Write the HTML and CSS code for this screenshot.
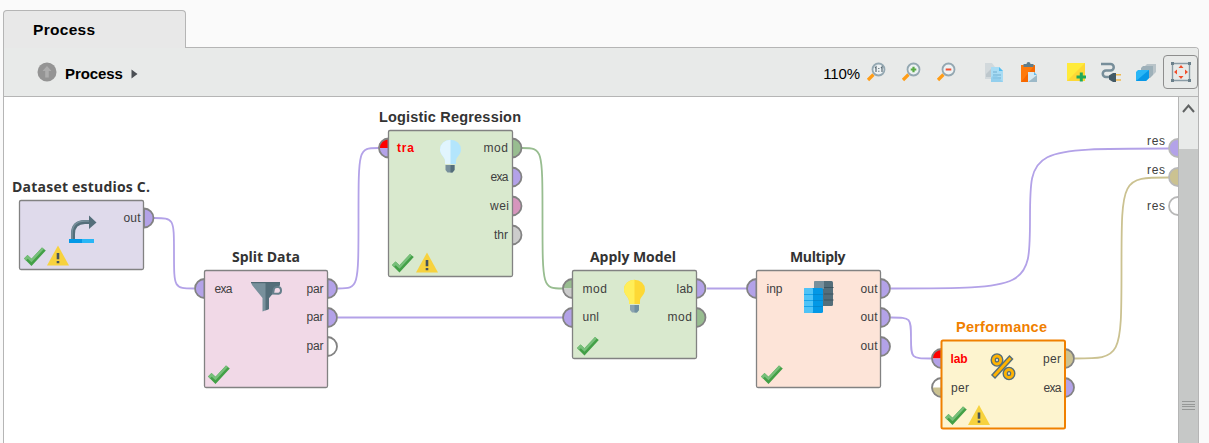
FILE: index.html
```html
<!DOCTYPE html>
<html lang="es">
<head>
<meta charset="utf-8">
<title>Process</title>
<link rel="stylesheet" href="styles.css">
</head>
<body>
<div class="tabs"><div class="tab">Process</div></div>
<main class="panel">
  <header class="toolbar">
    <svg class="up" width="20" height="20" viewBox="0 0 20 20"><circle cx="10" cy="10" r="9.500" fill="#949494"/><path d="M10 4l4.500 5h-2.700v6.500h-3.600v-6.500h-2.700z" fill="#adadad"/></svg>
    <span class="crumb">Process</span>
    <svg class="arrow" width="7" height="10" viewBox="0 0 7 10"><path d="M.5.500L6.500 5l-6 4.500z" fill="#4b4f54"/></svg>
    <div class="tools">
      <span class="zoom">110%</span>
      <svg class="tool lens" viewBox="0 0 20 20"><path d="M7.500 12.500L2 18" class="handle"/><circle cx="12.500" cy="7.500" r="6" class="glass"/><path d="M9 6l1-1v5M15 6l1-1v5M12.800 6v1M12.800 8.700v1" class="digits"/></svg>
      <svg class="tool lens" viewBox="0 0 20 20"><path d="M7.500 12.500L2 18" class="handle"/><circle cx="12.500" cy="7.500" r="6" class="glass"/><path d="M9.700 7.500h5.600M12.500 4.700v5.600" stroke="#5aaa45" stroke-width="2.200"/></svg>
      <svg class="tool lens last" viewBox="0 0 20 20"><path d="M7.500 12.500L2 18" class="handle"/><circle cx="12.500" cy="7.500" r="6" class="glass"/><path d="M9.700 7.500h5.600" stroke="#ef5236" stroke-width="2"/></svg>
      <svg class="tool copy" viewBox="0 0 20 20"><path d="M1 1h7l3 4v12H1z" fill="#d2d9dc"/><path d="M2 12l5-5v8H2z" fill="#bdc7cc"/><path d="M7 5h8l4 4v11H7z" fill="#a8dcf4"/><path d="M15 5l4 4h-4z" fill="#52bdf0"/><path d="M9 10h4M9 13h8M9 16h8" stroke="#83bddb" stroke-width="1.500"/><path d="M7 20v-4l4-4 8 8z" fill="#8ac9e9" opacity=".7"/></svg>
      <svg class="tool paste" viewBox="0 0 20 20"><path d="M2 3h14v17H2z" fill="#ff7a0b"/><path d="M16 3v17H2z" fill="#f76800"/><path d="M4.500 2h3a2 2 0 0 1 4 0h3v3h-10z" fill="#607d8b"/><path d="M9 10h6l3 3v7H9z" fill="#d4e9f4"/><path d="M18 13v7H9l4-3z" fill="#9cb9c8"/><path d="M15 10l3 3h-3z" fill="#66bce9"/></svg>
      <svg class="tool note" viewBox="0 0 20 20"><path d="M0 1h18v18H0z" fill="#ffeb3b"/><path d="M18 1v18H0z" fill="#fdd835"/><path d="M9.500 15h9.500M14.300 10.500v9" stroke="#20a95a" stroke-width="3"/></svg>
      <svg class="tool plug" viewBox="0 0 20 20"><path d="M0 2h9.500a3.200 3.200 0 0 1 0 6.500H5a3.200 3.200 0 0 0 0 6.500h5" fill="none" stroke="#778e9a" stroke-width="2.500"/><path d="M15 11v9h-3l-4-2.500v-4l4-2.500z" fill="#435965"/><path d="M15 12.700h5M15 18h5" stroke="#efb84d" stroke-width="1.600"/></svg>
      <svg class="tool layers" viewBox="0 0 20 20"><path d="M9 4l2-2h9v8l-3 3H9z" fill="#b9c4c9"/><path d="M5 6l2-2h10v9l-3 3H5z" fill="#9db0b9"/><path d="M0 10l2-2h11v8l-3 3H0z" fill="#29b6f6"/><path d="M0 19L13 8v8l-3 3z" fill="#0798e7"/></svg>
      <span class="fit"><svg width="20" height="20" viewBox="0 0 20 20"><path d="M0 1.500h20M0 18.500h20M1.500 0v20M18.500 0v20" stroke="#8a9ca6" stroke-width="1.400"/><path d="M0 0h3v3H0zM17 0h3v3h-3zM0 17h3v3H0zM17 17h3v3h-3z" fill="#6b808b"/><path d="M10 3l2.500 3h-5zM10 17l2.500-3h-5zM3 10l3-2.500v5zM17 10l-3-2.500v5z" fill="#f04e2c"/></svg></span>
    </div>
  </header>
  <section class="work">
    <svg class="canvas" width="1174" height="346" viewBox="4 97 1174 346">
      <defs>
        <g id="check"><path d="M0 11.500L3.500 8l4 3.800L18 0.500l3.800 3L7.500 19z" fill="#43a047"/><path d="M0 11.500L3.500 8l4 3.800L18 .500l1.900 1.500L7.500 15.200l-3.700-3.500-2 1.800z" fill="#77bf7a"/></g>
        <g id="warn"><path d="M11 0l11 20H0z" fill="#f7d23e"/><path d="M11 7.500v6.200M11 15.400v2.400" stroke="#45545c" stroke-width="2.600"/></g>
        <g id="out"><path d="M-.5-9.500a9.500 9.500 0 0 1 0 19z"/></g>
        <g id="in"><path d="M.5-9.500a9.500 9.500 0 0 0 0 19z"/></g>
      </defs>

      <g class="wires">
        <path d="M154 218c20 0 20 0 20 35.200s0 35.300 20 35.300"/>
        <path d="M338 288.500c20.500 0 20.500 0 20.500-70.500s0-70 20-70"/>
        <path d="M338 317.500h225M707 288.500h40M891 288.500C1030 288.500 1030 288.500 1030 218.500S1030 148.500 1169 148.500"/>
        <path d="M891 317.500c20 0 20 0 20 20.500s0 20.500 20 20.500"/>
        <path class="model" d="M522 148c20.500 0 20.500 0 20.500 70s0 70.500 20.500 70.500"/>
        <path class="perf" d="M1075 358.500c46.500 0 46.500 0 46.500-90.500s0-90.500 47.500-90.500"/>
      </g>

      <g class="ports data">
        <use href="#out" x="144.500" y="218"/><use href="#in" x="204" y="288.500"/><use href="#out" x="328" y="288.500"/><use href="#out" x="328" y="317.500"/>
        <use href="#out" x="512.500" y="177"/><use href="#in" x="572" y="317.500"/><use href="#out" x="696.500" y="288.500"/>
        <use href="#in" x="756" y="288.500"/><use href="#out" x="881" y="288.500"/><use href="#out" x="881" y="317.500"/><use href="#out" x="881" y="346.500"/>
        <use href="#out" x="1065" y="387.500"/>
      </g>
      <g class="ports">
        <use href="#out" x="328" y="346.500" fill="#fff"/><use href="#out" x="512.500" y="148" fill="#98bd90"/><use href="#out" x="512.500" y="206" fill="#d696bd"/><use href="#out" x="512.500" y="235" fill="#ccc"/>
        <use href="#out" x="696.500" y="317.500" fill="#98bd90"/><use href="#out" x="1065" y="358.500" fill="#cbc291"/>
      </g>
      <path d="M388 148v-9.500a9.500 9.500 0 0 0-9.500 9.500zM941 358.500v-9.500a9.500 9.500 0 0 0-9.500 9.500z" fill="red"/>
      <path d="M388 148v9.500a9.500 9.500 0 0 1-9.500-9.500zM941 358.500v9.500a9.500 9.500 0 0 1-9.500-9.500z" fill="#b3a2e8"/>
      <path d="M572 288.500v-9.500a9.500 9.500 0 0 0-9.500 9.500z" fill="#98bd90"/><path d="M572 288.500v9.500a9.500 9.500 0 0 1-9.500-9.500z" fill="#ccc"/>
      <path d="M941 387.500v-9.500a9.500 9.500 0 0 0-9.500 9.500z" fill="#fff"/><path d="M941 387.500v9.500a9.500 9.500 0 0 1-9.500-9.500z" fill="#cbc291"/>
      <g class="ports" fill="none"><use href="#in" x="388" y="148"/><use href="#in" x="572" y="288.500"/><use href="#in" x="941" y="358.500"/><use href="#in" x="941" y="387.500"/></g>
      <g class="ports result"><circle cx="1178" cy="148" r="9" fill="#b3a2e8"/><circle cx="1178" cy="177" r="9" fill="#cbc291"/><circle cx="1178" cy="206" r="9" fill="#fff"/></g>

      <g class="boxes">
        <rect x="19.500" y="200.500" width="124" height="69" rx="1.500" fill="#dfdaeb"/>
        <rect x="204.500" y="270.500" width="123" height="117" rx="1.500" fill="#f1d9e7"/>
        <rect x="388.500" y="130.500" width="124" height="146" rx="1.500" fill="#d9e9ce"/>
        <rect x="572.500" y="270.500" width="124" height="88" rx="1.500" fill="#d9e9ce"/>
        <rect x="756.500" y="270.500" width="124" height="117" rx="1.500" fill="#fde4d8"/>
        <rect class="selected" x="941.500" y="340.500" width="123.500" height="88" rx="1.500" fill="#fdf4cf"/>
      </g>

      <g class="titles">
        <text class="open" x="12" y="192" textLength="138">Dataset estudios C.</text>
        <text class="open" x="232" y="262" textLength="68">Split Data</text>
        <text x="379" y="122" textLength="142">Logistic Regression</text>
        <text class="open" x="590" y="262" textLength="86">Apply Model</text>
        <text class="open" x="790" y="262" textLength="55.500">Multiply</text>
        <text x="956" y="332" textLength="91" fill="#f08000">Performance</text>
      </g>
      <g class="labels">
        <text x="123.500" y="222" textLength="17">out</text>
        <text x="214.500" y="293" textLength="18">exa</text><text x="306.500" y="293" textLength="17">par</text><text x="306.500" y="321" textLength="17">par</text><text x="306.500" y="350" textLength="17">par</text>
        <text class="required" x="397" y="152" textLength="17">tra</text><text x="483.500" y="152" textLength="24.500">mod</text><text x="490.500" y="181" textLength="18">exa</text><text x="490" y="210" textLength="19">wei</text><text x="494" y="239" textLength="14">thr</text>
        <text x="582.500" y="293" textLength="24.500">mod</text><text x="582.500" y="321" textLength="16.500">unl</text><text x="676.500" y="293" textLength="16.500">lab</text><text x="667.500" y="321" textLength="24.500">mod</text>
        <text x="766.500" y="293" textLength="16">inp</text><text x="860.500" y="293" textLength="17">out</text><text x="860.500" y="321" textLength="17">out</text><text x="860.500" y="350" textLength="17">out</text>
        <text class="required" x="950.500" y="363" textLength="17">lab</text><text x="951" y="392" textLength="18">per</text><text x="1043" y="363" textLength="18">per</text><text x="1043.500" y="392" textLength="18">exa</text>
        <text x="1147" y="145" textLength="18">res</text><text x="1147" y="174" textLength="18">res</text><text x="1147" y="210" textLength="18">res</text>
      </g>

      <use href="#check" x="24" y="247"/><use href="#check" x="208" y="365"/><use href="#check" x="392" y="253.500"/><use href="#check" x="577" y="336.500"/><use href="#check" x="761" y="365"/><use href="#check" x="945" y="406"/>
      <use href="#warn" x="47" y="245.500"/><use href="#warn" x="416" y="252.500"/><use href="#warn" x="968" y="405"/>

      <g id="retrieve"><path d="M73 239v-5q0-12 12-12h5" fill="none" stroke="#546e7a" stroke-width="4"/><path d="M72 239v-5q0-13 13-13h5" fill="none" stroke="#78909c" stroke-width="1.500"/><path d="M89 215.500l7.500 7-7.500 6.500z" fill="#546e7a"/><path d="M69 239h25v4H69z" fill="#29b6f6"/><path d="M69 239h13v4H69z" fill="#0398e6"/></g>
      <g id="filter"><path d="M251 282h29v3l-11 13v11l-6.500 2.500V298L252 285z" fill="#78909c"/><path d="M265.500 282H280v3l-11 13v11l-3.500 1.500z" fill="#546e7a"/><path d="M251 282h29v1.200h-29z" fill="#506873"/><path d="M273 293.500l1-5q1-1.500 3-1.500h1.500q2.500.500 2.500 3.500t-2.500 3.200z" fill="#f1d9e7" stroke="#657f8b" stroke-width="2"/></g>
      <g id="bulb-light"><path d="M445 164v-3c0-4-5-6-5-11.500a10.500 9.800 0 0 1 21 0c0 5.500-5 7.500-5 11.500v3z" fill="#b3e5fc"/><path d="M450.500 139.700v24.300H445v-3c0-4-5-6-5-11.500a10.500 9.800 0 0 1 10.500-9.800z" fill="#e1f5fe"/><path d="M445.500 165h9v5l-2 2.500h-5l-2-2.500z" fill="#78909c"/><path d="M450.500 165h4v5l-2 2.500h-2z" fill="#546e7a"/></g>
      <g id="bulb-gold"><path d="M629 304v-3c0-4-5-6-5-11.500a10.500 9.800 0 0 1 21 0c0 5.500-5 7.500-5 11.500v3z" fill="#fdd835"/><path d="M634.500 279.700v24.300H629v-3c0-4-5-6-5-11.500a10.500 9.800 0 0 1 10.500-9.800z" fill="#ffee58"/><path d="M630 305h9v5l-2 2.500h-5l-2-2.500z" fill="#8ca4b0"/><path d="M634.500 305h4.500v5l-2 2.500h-2.500z" fill="#70909f"/></g>
      <g id="copies"><rect x="814" y="281" width="19" height="25" rx="1.500" fill="#546e7a"/><path d="M815 281h9v8h-10v-7z" fill="#78909c"/><path d="M824 287.500h9.500M824 294h9.500M824 300h9.500" stroke="#3c535e"/><rect x="804" y="288" width="19" height="25" rx="1.500" fill="#0398e6"/><rect x="804" y="288" width="9" height="25" rx="1" fill="#4fc3f7"/><path d="M804 294.500h9M804 300.500h9M804 306.500h9" stroke="#18a4ea"/><path d="M813 294.500h10M813 300.500h10M813 306.500h10" stroke="#0288d1"/></g>
      <g id="percent" fill="none"><g stroke="#546e7a" stroke-width="5.600"><ellipse cx="997" cy="360" rx="3.700" ry="4"/><ellipse cx="1009" cy="373.500" rx="3.700" ry="4"/><path d="M1011.500 357l-18.500 20"/></g><g stroke="#ffb300" stroke-width="2.800"><ellipse cx="997" cy="360" rx="3.700" ry="4"/><ellipse cx="1009" cy="373.500" rx="3.700" ry="4"/><path d="M1010.500 358l-16.500 18"/></g></g>
    </svg>
    <div class="scroll"><div class="scroll-up"><svg width="14" height="10" viewBox="0 0 14 10"><path d="M1 9L6.500 2.500L12 9" fill="none" stroke="#606363" stroke-width="2"/></svg></div><div class="thumb"><div class="grip"></div></div></div>
  </section>
</main>
</body>
</html>
```
FILE: styles.css
```css
* { box-sizing: border-box; }
body { margin: 0; padding: 10px 10px 0 3px; width: 1209px; height: 443px; overflow: hidden; background: #fafafa; font-family: "Liberation Sans", Arial, sans-serif; color: #000; }
.tabs { height: 37px; display: flex; }
.tab { width: 183px; height: 38px; position: relative; z-index: 1; padding: 10px 0 0 29px; background: #e8e8e8; border: 1px solid #b5b5b5; border-bottom: 0; border-radius: 4px 4px 0 0; font-size: 15.5px; line-height: 18px; font-weight: bold; letter-spacing: .3px; }
.panel { width: 1196px; height: 397px; border: 1px solid #b5b5b5; border-bottom: 0; border-radius: 0 4px 0 0; overflow: hidden; }
.toolbar { height: 49px; display: flex; align-items: center; background: #e8eae9; border-bottom: 1px solid #b5b5b5; padding-left: 33px; }
.crumb { margin: 3px 8px 0 8px; font-size: 15px; line-height: 18px; font-weight: bold; letter-spacing: -.1px; }
.arrow { margin-top: 4px; }
.tools { display: flex; align-items: center; margin-left: auto; }
.zoom { font-size: 15px; line-height: 18px; margin: 4px 6px 0 0; letter-spacing: -.1px; }
.tool { width: 20px; height: 20px; flex: none; }
.lens { margin-right: 15px; }
.lens.last { margin-right: 28px; }
.handle { stroke: #ff9d17; stroke-width: 3.2; fill: none; }
.glass { fill: #edf2f4; stroke: #94a8b2; stroke-width: 1.8; }
.digits { fill: none; stroke: #596b74; stroke-width: 1.2; }
.copy { margin-right: 15px; }
.paste { margin-right: 28px; }
.note { margin-right: 14px; }
.plug { margin-right: 15px; }
.layers { margin-right: 7px; }
.fit { width: 35px; height: 34px; border: 1px solid #8e8e8e; border-radius: 4px; display: flex; align-items: center; justify-content: center; }
.work { display: flex; height: 347px; background: #fff; }
.canvas { display: block; flex: none; }
.wires { fill: none; stroke: #b3a2e8; stroke-width: 1.8; }
.wires .model { stroke: #98bd90; }
.wires .perf { stroke: #cbc291; }
.ports { stroke: #828282; stroke-width: 1.8; }
.data { fill: #b3a2e8; }
.result { stroke: #b8b8b8; }
.boxes { stroke: #828282; stroke-width: 1.3; }
.boxes .selected { stroke: #f08000; stroke-width: 2; }
.titles { font-size: 14.5px; font-weight: bold; fill: #333; }
.open { font-family: "Open Sans", sans-serif; font-size: 14px; }
.labels { font-size: 12px; fill: #404040; }
.required { font-weight: bold; fill: red; }
.scroll { width: 20px; border-left: 1px solid #b5b5b5; background: #c6c8c7; }
.scroll-up { height: 52px; background: #e8eae9; padding: 6px 0 0 3px; }
.scroll-up svg { display: block; }
.thumb { padding: 252px 0 0 3px; }
.grip { width: 13px; height: 9px; border: solid #969897; border-width: 1px 0; background: linear-gradient(#969897, #969897) 0 2px / 13px 1px no-repeat, linear-gradient(#969897, #969897) 0 4px / 13px 1px no-repeat; }
```
